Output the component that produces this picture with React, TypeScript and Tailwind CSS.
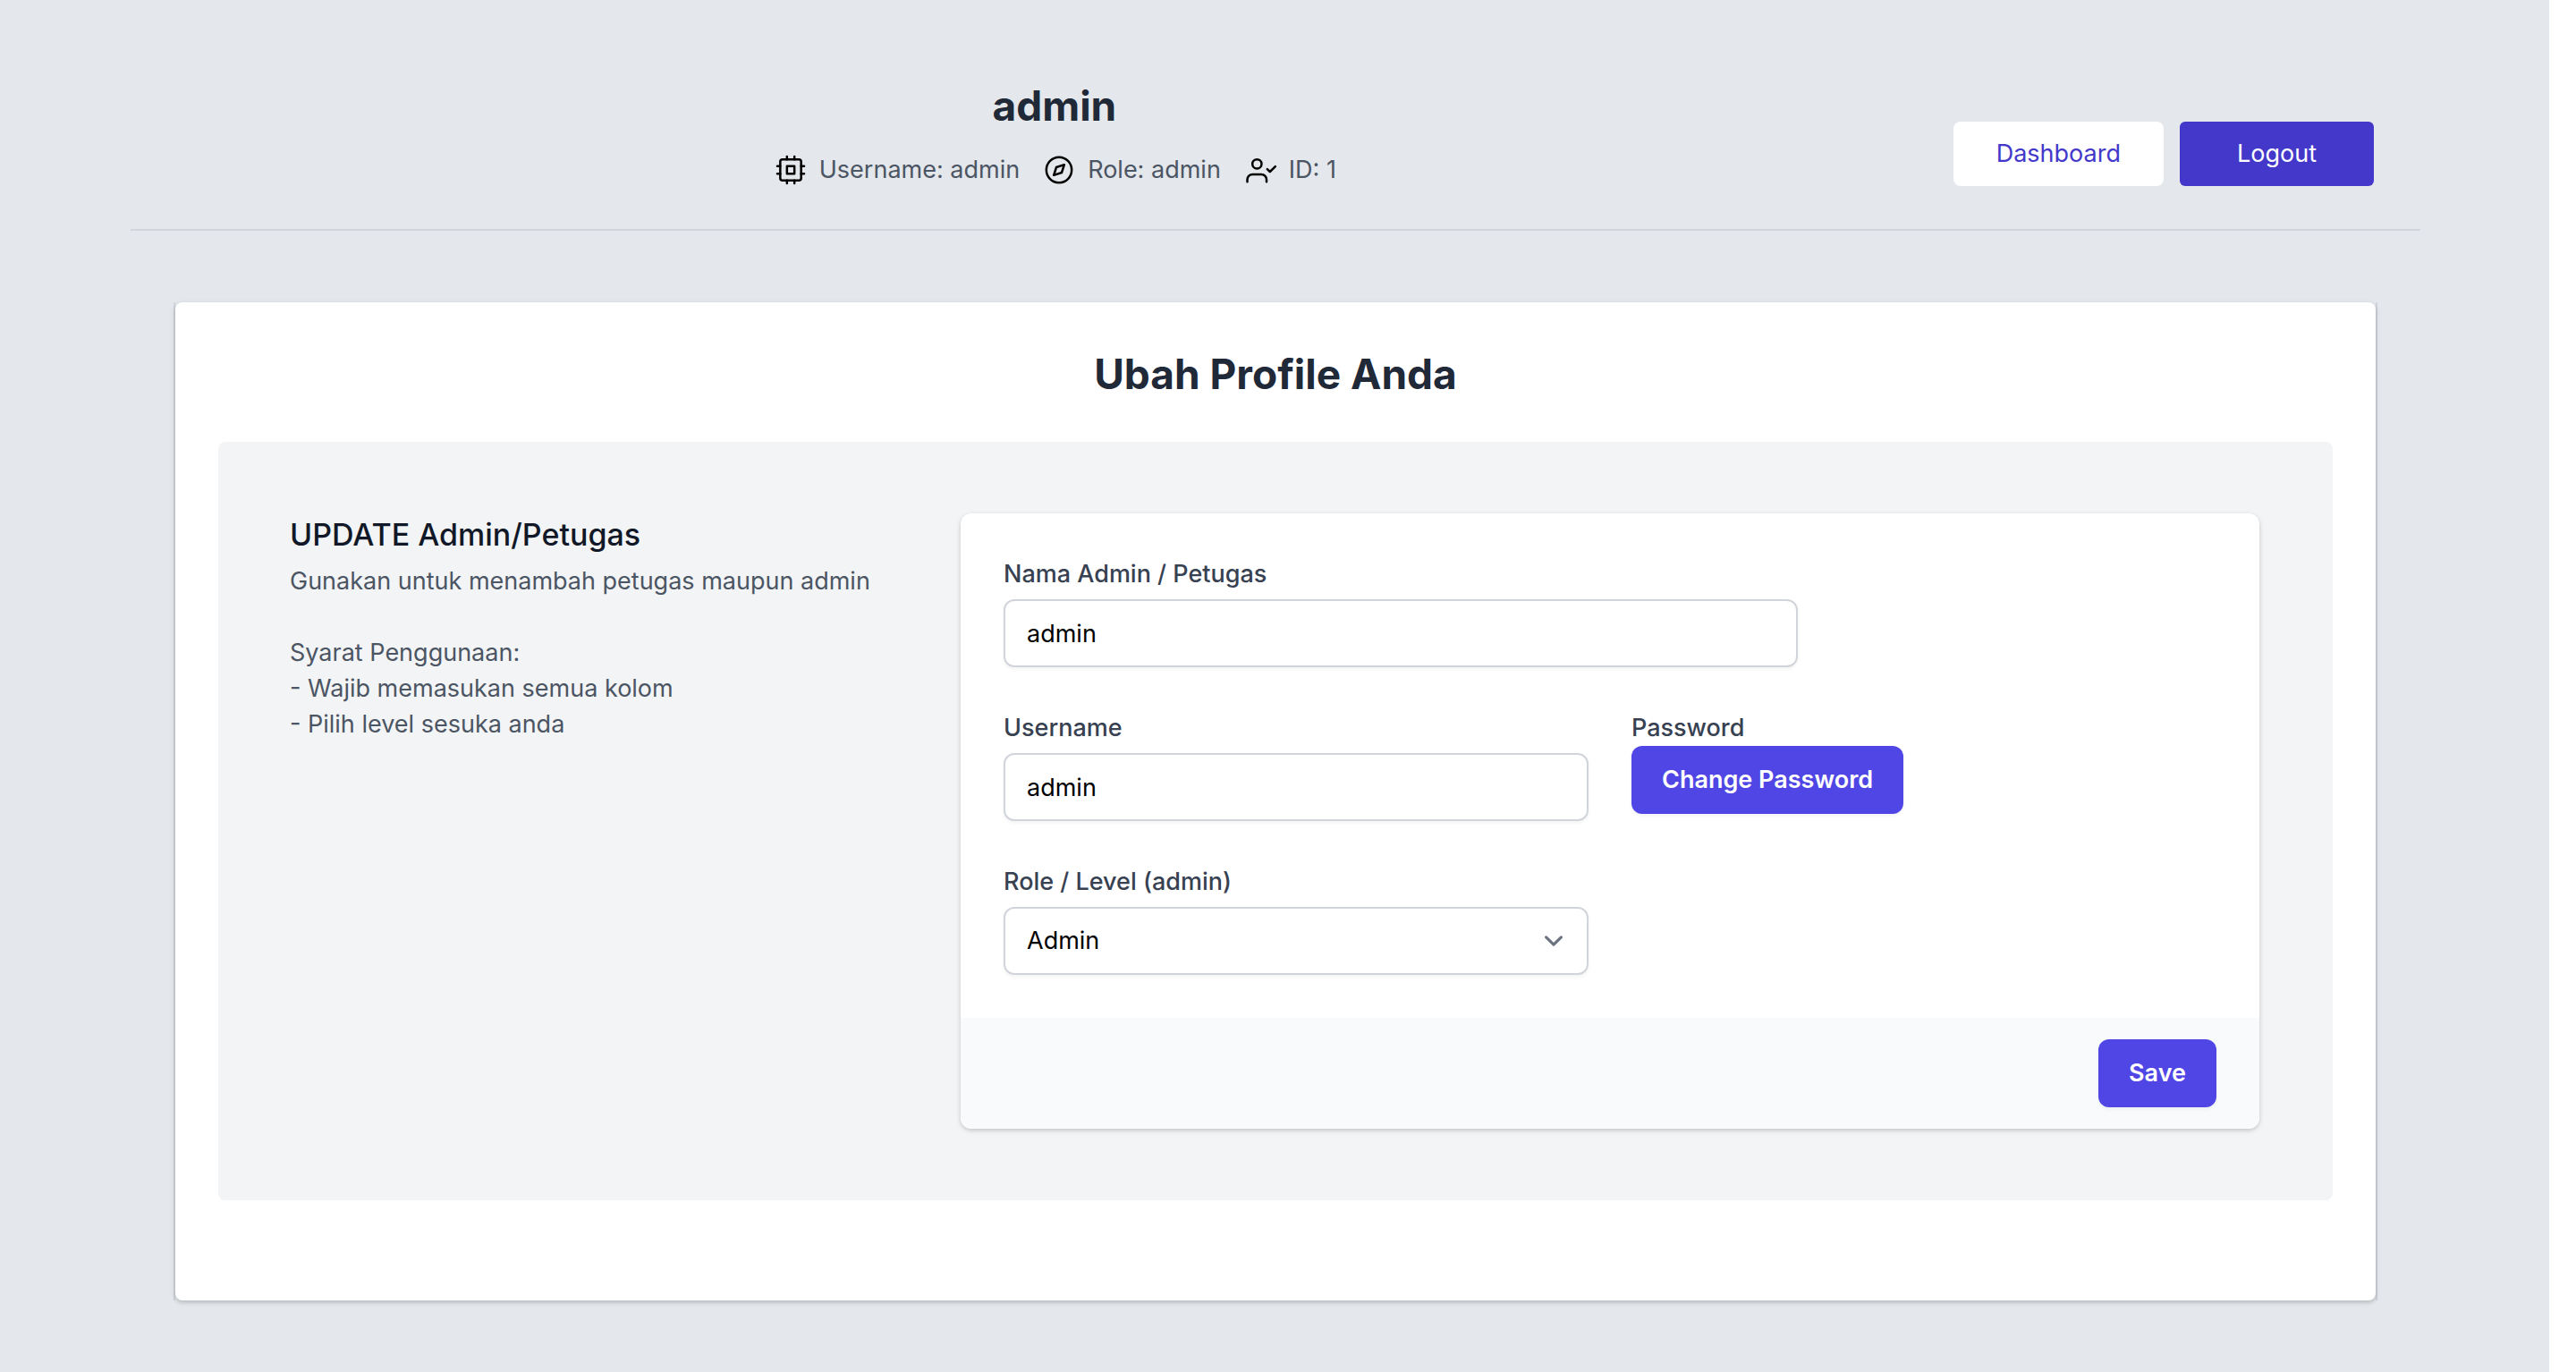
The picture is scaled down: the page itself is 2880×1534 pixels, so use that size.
import React from "react";

const iconProps = {
  viewBox: "0 0 24 24",
  fill: "none",
  stroke: "currentColor",
  strokeWidth: 1.5,
  strokeLinecap: "round",
  strokeLinejoin: "round",
  "aria-hidden": true,
  className: "size-10 shrink-0 text-black",
} as const;

function CpuIcon() {
  return (
    <svg {...iconProps}>
      <rect x="5" y="5" width="14" height="14" rx="1.5" />
      <path d="M9.5 9.5h5v5h-5z" />
      <path d="M3 9.5h2M3 14.5h2M9.5 3v2M14.5 3v2M21 9.5h-2M21 14.5h-2M14.5 21v-2M9.5 21v-2" />
    </svg>
  );
}

function CompassIcon() {
  return (
    <svg {...iconProps}>
      <circle cx="12" cy="12" r="8.5" />
      <path d="M8.5 15.5l1.7 -5.3l5.3 -1.7l-1.7 5.3z" />
    </svg>
  );
}

function UserCheckIcon() {
  return (
    <svg {...iconProps}>
      <circle cx="9.8" cy="8" r="3.1" />
      <path d="M3.3 20v-1.5a3.5 3.5 0 0 1 3.5 -3.5h5.9a3.5 3.5 0 0 1 3.5 3.5v1.5" />
      <path d="M16.7 11.5l1.8 1.7l3.6 -3.5" />
    </svg>
  );
}

function Meta({ icon, children }: { icon: React.ReactNode; children: React.ReactNode }) {
  return (
    <li className="flex items-center gap-3">
      {icon}
      <span>{children}</span>
    </li>
  );
}

const labelClass = "block font-medium text-[#374151]";
const fieldClass =
  "mt-2 block h-19 w-full rounded-xl border-2 border-[#d1d5db] bg-white px-6 text-black shadow-[0_2px_4px_rgba(0,0,0,0.05)]";
const buttonClass =
  "h-19 rounded-xl bg-[#4f46e5] px-[34px] font-semibold text-white shadow-[0_2px_4px_rgba(0,0,0,0.05)]";

export default function App() {
  return (
    <div className="flex bg-white font-[Inter,sans-serif] text-[27px] leading-10">
      <div className="min-h-screen flex-1 bg-[#e4e7eb] pb-20 pl-0.5">
        <div className="mx-auto max-w-[2560px]">
          <header className="flex items-end gap-6 border-b-2 border-[#d1d5db] px-13 pt-[86px] pb-[46px]">
            <div className="flex flex-1 flex-col items-center gap-5">
              <h1 className="text-[46px] leading-16 font-bold text-[#1f2937]">admin</h1>
              <ul className="flex items-center gap-6 text-[#4b5563]">
                <Meta icon={<CpuIcon />}>Username: admin</Meta>
                <Meta icon={<CompassIcon />}>Role: admin</Meta>
                <Meta icon={<UserCheckIcon />}>ID: 1</Meta>
              </ul>
            </div>
            <nav className="mb-0.5 flex gap-[18px]">
              <a href="#dashboard" className="rounded-lg bg-white px-12 py-4 text-[#4338ca]">
                Dashboard
              </a>
              <button type="button" className="rounded-md bg-[#4338ca] px-16 py-4 text-white">
                Logout
              </button>
            </nav>
          </header>

          <main className="mx-12 mt-20 border-x-2 border-[#d1d5db]">
            <section className="rounded-lg bg-white px-12 pt-12 pb-28 shadow-[0_2px_6px_rgba(0,0,0,0.1),0_2px_4px_rgba(0,0,0,0.12)]">
              <h2 className="mb-11 text-center text-[46px] leading-16 font-bold text-[#1f2937]">
                Ubah Profile Anda
              </h2>
              <div className="grid grid-cols-3 gap-12 rounded-lg bg-[#f3f4f6] py-20 pr-[82px] pl-20">
                <div className="text-[#4b5563]">
                  <h3 className="text-[34px] leading-12 font-medium text-[#111827]">UPDATE Admin/Petugas</h3>
                  <p className="mt-2">Gunakan untuk menambah petugas maupun admin</p>
                  <p className="mt-10">Syarat Penggunaan:</p>
                  <p>- Wajib memasukan semua kolom</p>
                  <p>- Pilih level sesuka anda</p>
                </div>

                <form className="col-span-2 overflow-hidden rounded-xl bg-white shadow-[0_2px_6px_rgba(0,0,0,0.1),0_2px_4px_rgba(0,0,0,0.1)]">
                  <div className="grid grid-cols-6 gap-12 p-12">
                    <div className="col-span-4">
                      <label htmlFor="name" className={labelClass}>
                        Nama Admin / Petugas
                      </label>
                      <input id="name" type="text" defaultValue="admin" className={fieldClass} />
                    </div>
                    <div className="col-span-3 col-start-1">
                      <label htmlFor="username" className={labelClass}>
                        Username
                      </label>
                      <input id="username" type="text" defaultValue="admin" className={fieldClass} />
                    </div>
                    <div className="col-span-3">
                      <label htmlFor="password" className={labelClass}>
                        Password
                      </label>
                      <button id="password" type="button" className={buttonClass}>
                        Change Password
                      </button>
                    </div>
                    <div className="col-span-3 col-start-1">
                      <label htmlFor="role" className={labelClass}>
                        Role / Level (admin)
                      </label>
                      <div className="relative">
                        <select id="role" defaultValue="Admin" className={`${fieldClass} appearance-none`}>
                          <option>Admin</option>
                          <option>Petugas</option>
                        </select>
                        <svg
                          viewBox="0 0 20 20"
                          fill="none"
                          stroke="#6b7280"
                          strokeWidth="1.5"
                          strokeLinecap="round"
                          strokeLinejoin="round"
                          aria-hidden="true"
                          className="pointer-events-none absolute inset-y-0 right-[18px] my-auto size-[42px]"
                        >
                          <path d="M6 8l4 4 4-4" />
                        </svg>
                      </div>
                    </div>
                  </div>
                  <div className="flex justify-end bg-[#f9fafb] px-12 py-6">
                    <button type="submit" className={buttonClass}>
                      Save
                    </button>
                  </div>
                </form>
              </div>
            </section>
          </main>
        </div>
      </div>
      <div className="w-[30px] shrink-0 bg-white" />
    </div>
  );
}
